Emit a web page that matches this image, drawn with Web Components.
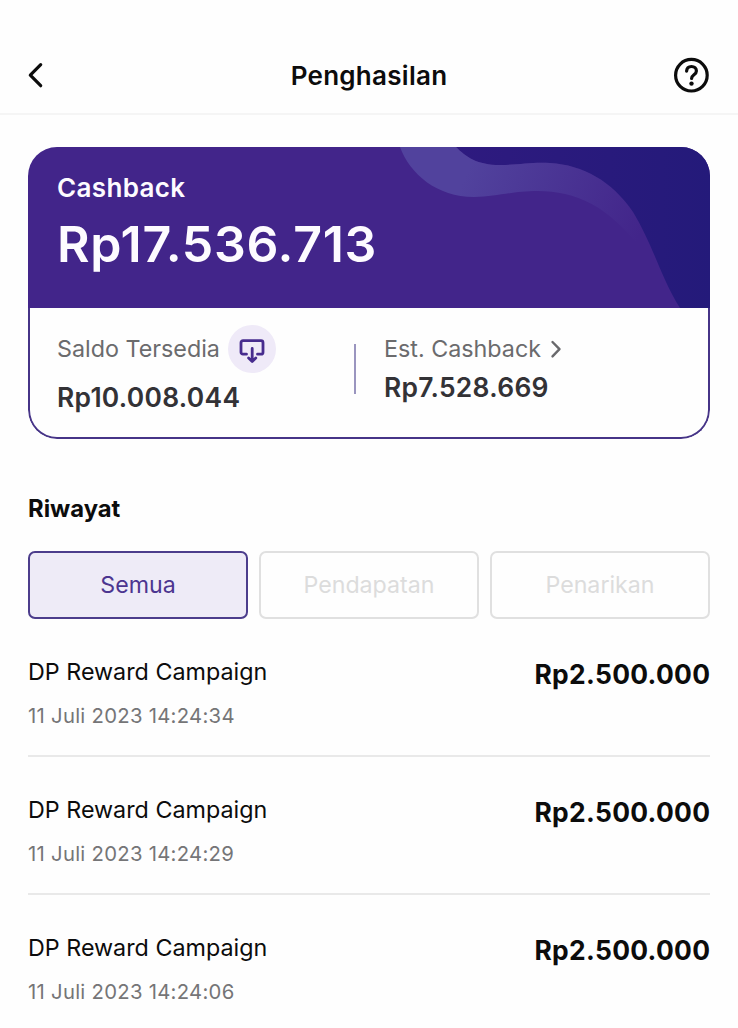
<!DOCTYPE html>
<html lang="id">
<head>
<meta charset="UTF-8">
<meta name="viewport" content="width=device-width, initial-scale=1.0">
<title>Penghasilan</title>
<style>
  html, body {
    margin: 0;
    padding: 0;
  }
  body {
    font-family: Inter, "Liberation Sans", sans-serif;
    background: #fefefe;
    color: #0c0c0c;
    height: 1028px;
    overflow: hidden;
    --ungu: #42258a;
    --ungu-muda: #efeaf8;
    --abu: #6b6b6d;
  }
</style>
</head>
<body>
<income-page></income-page>

<script>
class PageHeader extends HTMLElement {
  constructor() {
    super();
    this.attachShadow({ mode: 'open' });
    this.shadowRoot.innerHTML = `
      <style>
        :host {
          display: block;
          padding-top: 37px;
          border-bottom: 2px solid #f5f5f5;
        }
        header {
          display: grid;
          grid-template-columns: 36px 1fr 36px;
          align-items: center;
          height: 76px;
          padding: 0 28px;
        }
        h1 {
          margin: 2px 0 0;
          text-align: center;
          font-size: 26px;
          line-height: 32px;
          font-weight: 600;
          letter-spacing: 0.27px;
        }
        svg {
          display: block;
          fill: none;
          stroke: #0c0c0c;
          stroke-width: 3.2;
          stroke-linecap: round;
          stroke-linejoin: round;
        }
      </style>
      <header>
        <svg width="36" height="36" viewBox="0 0 36 36"><path d="M12.700 7.700 2.300 18.200l10.400 10.500"/></svg>
        <h1><slot></slot></h1>
        <svg width="36" height="36" viewBox="0 0 36 36">
          <circle cx="17.400" cy="18.200" r="15.800"/>
          <path d="M12.600 14.200c.2-3 2.200-4.700 4.900-4.700 2.800 0 4.900 1.800 4.900 4.400 0 3.900-4.800 3.700-4.800 7.500"/>
          <circle cx="17.500" cy="26.600" r="2.200" fill="#0c0c0c" stroke="none"/>
        </svg>
      </header>
    `;
  }
}

class BalanceItem extends HTMLElement {
  constructor() {
    super();
    this.attachShadow({ mode: 'open' });
    this.shadowRoot.innerHTML = `
      <style>
        :host {
          display: block;
        }
        .label {
          display: flex;
          align-items: center;
          height: 48px;
          font-size: 23.3px;
          line-height: 30px;
          color: var(--abu);
          white-space: nowrap;
        }
        .value {
          margin-top: var(--value-gap, 0);
          font-size: 26.4px;
          line-height: 32px;
          font-weight: 600;
          color: #333236;
          letter-spacing: 0.3px;
        }
      </style>
      <div class="label"><slot name="label"></slot><slot name="icon"></slot></div>
      <div class="value"><slot></slot></div>
    `;
  }
}

class CashbackCard extends HTMLElement {
  constructor() {
    super();
    this.attachShadow({ mode: 'open' });
    this.shadowRoot.innerHTML = `
      <style>
        :host {
          display: block;
          height: 292px;
          border-radius: 29px;
          overflow: hidden;
        }
        .hero {
          display: grid;
          height: 161px;
          background: var(--ungu);
        }
        .hero > * {
          grid-area: 1 / 1;
        }
        .text {
          padding: 24px 29px 0;
          color: #fdfbff;
          z-index: 1;
        }
        .caption {
          font-size: 26px;
          line-height: 34px;
          font-weight: 600;
          letter-spacing: 0.35px;
        }
        .total {
          margin-top: 9px;
          font-size: 50px;
          line-height: 60px;
          font-weight: 600;
          letter-spacing: 0.7px;
        }
        .balances {
          display: flex;
          box-sizing: border-box;
          height: 131px;
          padding: 17px 27px 0;
          border: 2px solid #463487;
          border-top: none;
          border-radius: 0 0 29px 29px;
        }
        .first {
          width: 297px;
          --value-gap: 8px;
        }
        .second {
          --value-gap: -2px;
        }
        .line {
          width: 2px;
          height: 50px;
          margin: 19px 28px 0 0;
          background: #9a95bf;
        }
        span {
          margin: 0 9px 0 0;
        }
        .badge {
          display: flex;
          align-items: center;
          justify-content: center;
          width: 48px;
          height: 48px;
          margin-left: -0.5px;
          border-radius: 50%;
          background: var(--ungu-muda);
        }
        svg {
          display: block;
        }
      </style>
      <div class="hero">
        <svg width="682" height="161" viewBox="28 147 682 161">
          <defs>
            <linearGradient id="dark" x1="0" y1="0" x2="1" y2="0">
              <stop offset="0" stop-color="#2e1a7f"/>
              <stop offset="1" stop-color="#241a7a"/>
            </linearGradient>
            <linearGradient id="band" gradientUnits="userSpaceOnUse" x1="470" y1="165" x2="640" y2="235">
              <stop offset="0" stop-color="#51429d"/>
              <stop offset="1" stop-color="#51429d" stop-opacity="0"/>
            </linearGradient>
          </defs>
          <path fill="url(#dark)" d="M456 147C466 157 477 165 500 165C520 165 530 162 550 163C583 165 612 181 633 212C654 247 661 278 680 308H712V147Z"/>
          <path fill="url(#band)" d="M400 147C410 174 437 197 474 197C497 197 510 191 538 191C585 192 625 210 680 308C661 278 654 247 633 212C612 181 583 165 550 163C530 162 520 165 500 165C477 165 466 157 456 147Z"/>
        </svg>
        <div class="text">
          <div class="caption">Cashback</div>
          <div class="total">Rp17.536.713</div>
        </div>
      </div>
      <div class="balances">
        <balance-item class="first">
          <span slot="label">Saldo Tersedia</span>
          <div class="badge" slot="icon">
            <svg width="28" height="28" viewBox="0 -1 28 28" fill="none" stroke="#472c8e" stroke-width="2.800" stroke-linecap="round" stroke-linejoin="round">
              <path d="M8.500 18.200H5a2 2 0 0 1-2-2V6.700a2 2 0 0 1 2-2h18a2 2 0 0 1 2 2v9.500a2 2 0 0 1-2 2h-3.500"/>
              <path d="M14.200 12.500v12.500M10.600 22l3.600 3.500 3.600-3.500"/>
            </svg>
          </div>
          Rp10.008.044
        </balance-item>
        <div class="line"></div>
        <balance-item class="second">
          <span slot="label">Est. Cashback</span>
          <svg slot="icon" width="12" height="20" viewBox="0 0 12 20" fill="none" stroke="#69696c" stroke-width="2.400" stroke-linecap="round" stroke-linejoin="round"><path d="M2.500 3 9.500 10.200l-7 7.200"/></svg>
          Rp7.528.669
        </balance-item>
      </div>
    `;
  }
}

class FilterTab extends HTMLElement {
  constructor() {
    super();
    this.attachShadow({ mode: 'open' });
    this.shadowRoot.innerHTML = `
      <style>
        :host {
          display: flex;
          flex: 1;
          align-items: center;
          justify-content: center;
          box-sizing: border-box;
          height: 68px;
          border: 2px solid #e0e0e0;
          border-radius: 7px;
          color: #dcdcdc;
          font-size: 23.2px;
          line-height: 30px;
        }
        :host([active]) {
          border-color: #4c3d8c;
          background: #eeebf7;
          color: #4c3590;
        }
      </style>
      <slot></slot>
    `;
  }
}

class HistoryRow extends HTMLElement {
  constructor() {
    super();
    this.attachShadow({ mode: 'open' });
    this.shadowRoot.innerHTML = `
      <style>
        :host {
          display: flex;
          justify-content: space-between;
          box-sizing: border-box;
          height: 138px;
          padding-top: 38px;
          border-bottom: 2px solid #e9e9e9;
        }
        .name {
          margin-top: -1px;
          font-size: 23.3px;
          line-height: 32px;
        }
        .date {
          margin-top: 14px;
          font-size: 20.3px;
          line-height: 28px;
          color: #757577;
          letter-spacing: 0.28px;
        }
        .amount {
          margin-right: -0.3px;
          font-size: 26.4px;
          line-height: 34px;
          font-weight: 700;
          letter-spacing: 0.32px;
        }
      </style>
      <div>
        <div class="name"><slot></slot></div>
        <div class="date">${this.getAttribute('date')}</div>
      </div>
      <div class="amount">${this.getAttribute('amount')}</div>
    `;
  }
}

class IncomePage extends HTMLElement {
  constructor() {
    super();
    this.attachShadow({ mode: 'open' });
    this.shadowRoot.innerHTML = `
      <style>
        :host {
          display: block;
        }
        main {
          padding: 32px 28px 0;
        }
        h2 {
          margin: 54px 0 0;
          font-size: 23.8px;
          line-height: 32px;
          font-weight: 700;
        }
        .tabs {
          display: flex;
          gap: 11px;
          margin-top: 26px;
        }
      </style>
      <page-header>Penghasilan</page-header>
      <main>
        <cashback-card></cashback-card>
        <h2>Riwayat</h2>
        <div class="tabs">
          <filter-tab active>Semua</filter-tab>
          <filter-tab>Pendapatan</filter-tab>
          <filter-tab>Penarikan</filter-tab>
        </div>
        <history-row date="11 Juli 2023 14:24:34" amount="Rp2.500.000">DP Reward Campaign</history-row>
        <history-row date="11 Juli 2023 14:24:29" amount="Rp2.500.000">DP Reward Campaign</history-row>
        <history-row date="11 Juli 2023 14:24:06" amount="Rp2.500.000">DP Reward Campaign</history-row>
      </main>
    `;
  }
}

customElements.define('page-header', PageHeader);
customElements.define('balance-item', BalanceItem);
customElements.define('cashback-card', CashbackCard);
customElements.define('filter-tab', FilterTab);
customElements.define('history-row', HistoryRow);
customElements.define('income-page', IncomePage);
</script>
</body>
</html>
